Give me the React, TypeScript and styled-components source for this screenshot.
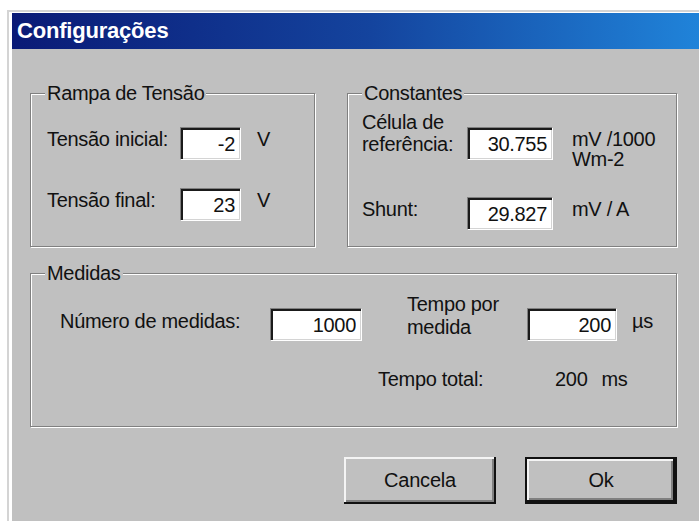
import styled, { createGlobalStyle, css } from "styled-components";

const GlobalStyle = createGlobalStyle`
  html, body {
    margin: 0;
    padding: 0;
    background: #fff;
    overflow: hidden;
  }
  body {
    font-family: "Liberation Sans", Arial, sans-serif;
  }
`;

const FONT = `"Liberation Sans", Arial, sans-serif`;

const Window = styled.div`
  margin: 10px 0 0 7px;
  width: 720px;
  height: 520px;
  padding: 1px 0 0 3px;
  background: #c0c0c0;
  border-top: 2px solid #d4d4d4;
  border-left: 2px solid #d4d4d4;
  box-shadow: inset 3px 1px 0 #fff;
`;

const TitleBar = styled.div`
  display: flex;
  align-items: center;
  height: 36px;
  padding-left: 5px;
  background: linear-gradient(to right, #0a1a76 0%, #14449e 50%, #2084da 96%, #2890e4 100%);
  color: #fff;
  font-family: ${FONT};
  font-weight: bold;
  font-size: 22px;
  letter-spacing: -0.2px;
`;

const Body = styled.div`
  display: flex;
  flex-direction: column;
  width: 647px;
  padding: 34px 0 0 18px;
`;

const TopRow = styled.div`
  display: flex;
  gap: 32px;
`;

const Group = styled.fieldset<{ $width: number; $height: number }>`
  box-sizing: border-box;
  width: ${(p) => p.$width}px;
  height: ${(p) => p.$height}px;
  min-width: 0;
  margin: 0;
  padding: 0;
  border: 1px solid #808080;
  box-shadow: 1px 1px 0 #fff, inset 1px 1px 0 #fff;
`;

const Legend = styled.legend`
  margin-left: 14px;
  padding: 0 2px;
  font-family: ${FONT};
  font-size: 20px;
  line-height: 20px;
  letter-spacing: -0.3px;
  color: #111;
  background: #c0c0c0;
`;

const FieldGrid = styled.div<{ $label: number; $input: number; $unitGap: number; $pad: number }>`
  display: grid;
  grid-template-columns: ${(p) => p.$label}px ${(p) => p.$input}px auto;
  row-gap: 28px;
  align-items: start;
  padding: 24px 0 0 ${(p) => p.$pad}px;

  & > :nth-child(3n) {
    margin-left: ${(p) => p.$unitGap}px;
  }
`;

const Label = styled.span<{ $top?: number; $left?: number; $w?: number; $lh?: number }>`
  display: block;
  flex: none;
  margin-top: ${(p) => p.$top ?? 2}px;
  ${(p) => p.$left !== undefined && css`margin-left: ${p.$left}px;`}
  ${(p) => p.$w !== undefined && css`width: ${p.$w}px;`}
  font-family: ${FONT};
  font-size: 20px;
  line-height: ${(p) => p.$lh ?? 20}px;
  letter-spacing: -0.3px;
  color: #111;
  white-space: nowrap;
`;

const NumberBox = styled.input.attrs({ readOnly: true, type: "text" })<{ $w?: number }>`
  box-sizing: border-box;
  width: ${(p) => (p.$w ? `${p.$w}px` : "100%")};
  height: 33px;
  margin: 0;
  padding: 2px 5px 0 0;
  text-align: right;
  font-family: ${FONT};
  font-size: 20px;
  letter-spacing: -0.3px;
  color: #111;
  background: #fff;
  border: 1px solid;
  border-color: #808080 #fff #fff #808080;
  box-shadow: inset 2px 2px 0 #1a1a1a, inset -1px -1px 0 #d4d4d4;
  outline: none;
`;

const MeasureRow = styled.div<{ $pad: number; $top: number }>`
  display: flex;
  align-items: flex-start;
  padding-left: ${(p) => p.$pad}px;
  margin-top: ${(p) => p.$top}px;
`;

const Spacer = styled.div`
  height: 16px;
`;

const ButtonRow = styled.div`
  display: flex;
  justify-content: flex-end;
  gap: 29px;
  margin-top: 30px;
  padding-right: 0;
`;

const Button = styled.button<{ $default?: boolean }>`
  box-sizing: border-box;
  width: 152px;
  height: 47px;
  padding: 0;
  font-family: ${FONT};
  font-size: 20px;
  letter-spacing: -0.2px;
  color: #111;
  background: #c0c0c0;
  border: none;
  box-shadow: inset -2px -2px 0 #111, inset 2px 2px 0 #f4f4f4, inset -4px -4px 0 #808080;
  ${(p) =>
    p.$default &&
    css`
      border: 2px solid #111;
    `}
`;

export default function App() {
  return (
    <>
      <GlobalStyle />
      <Window>
        <TitleBar>Configurações</TitleBar>
        <Body>
          <TopRow>
            <Group $width={285} $height={164}>
              <Legend>Rampa de Tensão</Legend>
              <FieldGrid $label={133} $input={61} $unitGap={16} $pad={16}>
                <Label>Tensão inicial:</Label>
                <NumberBox value="-2" />
                <Label>V</Label>
                <Label>Tensão final:</Label>
                <NumberBox value="23" />
                <Label>V</Label>
              </FieldGrid>
            </Group>
            <Group $width={330} $height={164}>
              <Legend>Constantes</Legend>
              <FieldGrid $label={105} $input={86} $unitGap={19} $pad={14}>
                <Label $top={-16} $lh={22}>
                  Célula de
                  <br />
                  referência:
                </Label>
                <NumberBox value="30.755" />
                <Label>
                  mV /1000
                  <br />
                  Wm-2
                </Label>
                <Label>Shunt:</Label>
                <NumberBox value="29.827" />
                <Label>mV / A</Label>
              </FieldGrid>
            </Group>
          </TopRow>
          <Spacer />
          <Group $width={647} $height={164}>
            <Legend>Medidas</Legend>
            <MeasureRow $pad={29} $top={25}>
              <Label $w={210} $top={3}>
                Número de medidas:
              </Label>
              <NumberBox $w={92} value="1000" />
              <Label $left={45} $w={120} $top={-15} $lh={23}>
                Tempo por
                <br />
                medida
              </Label>
              <NumberBox $w={90} value="200" />
              <Label $left={15} $top={3}>
                µs
              </Label>
            </MeasureRow>
            <MeasureRow $pad={347} $top={28}>
              <Label $w={177} $top={0}>
                Tempo total:
              </Label>
              <Label $top={0}>200</Label>
              <Label $left={14} $top={0}>
                ms
              </Label>
            </MeasureRow>
          </Group>
          <ButtonRow>
            <Button>Cancela</Button>
            <Button $default>Ok</Button>
          </ButtonRow>
        </Body>
      </Window>
    </>
  );
}
